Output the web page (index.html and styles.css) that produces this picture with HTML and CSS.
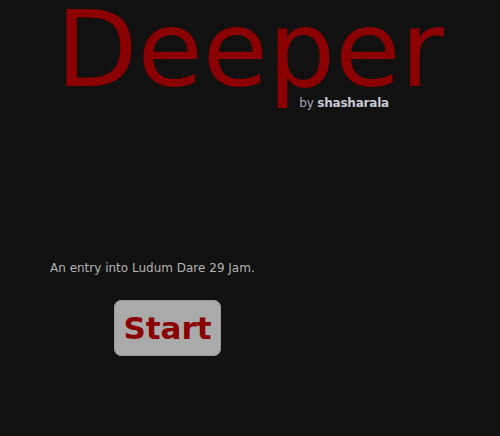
FILE: index.html
```html
<!DOCTYPE html>
<html>
<head>
<meta charset="utf-8">
<link rel="stylesheet" href="styles.css">
</head>
<body>
<div class="page">
  <header class="head">
    <h1 class="title">Deeper</h1>
    <div class="byline">by <b>shasharala</b></div>
  </header>
  <p class="intro">An entry into Ludum Dare 29 Jam.</p>
  <div class="actions"><button class="start">Start</button></div>
</div>
</body>
</html>
```
FILE: styles.css
```css
html, body { margin: 0; padding: 0; }
body {
  background: #111111;
  font-family: "DejaVu Sans", Verdana, sans-serif;
  width: 500px;
  height: 436px;
  overflow: hidden;
}
.page { display: flex; flex-direction: column; }
.head { display: flex; flex-direction: column; align-items: center; }
.title {
  margin: 0;
  padding-top: 3px;
  font-weight: normal;
  font-size: 106px;
  line-height: 94px;
  color: #8b0000;
}
.byline {
  align-self: flex-end;
  margin-right: 111px;
  margin-top: -1px;
  font-size: 12px;
  letter-spacing: -0.2px;
  color: #a7a7b4;
}
.byline b { color: #c8c8d4; }
.intro {
  margin: 151px 0 0 50px;
  font-size: 12px;
  color: #b4b4b4;
}
.actions { padding-left: 114px; margin-top: 25px; }
.start {
  width: 107px;
  height: 56px;
  background: #aaaaaa;
  border: 1px solid #999;
  border-radius: 7px;
  color: #8b0000;
  font-family: "DejaVu Sans", Verdana, sans-serif;
  font-weight: bold;
  font-size: 31px;
  padding: 0;
}
```
